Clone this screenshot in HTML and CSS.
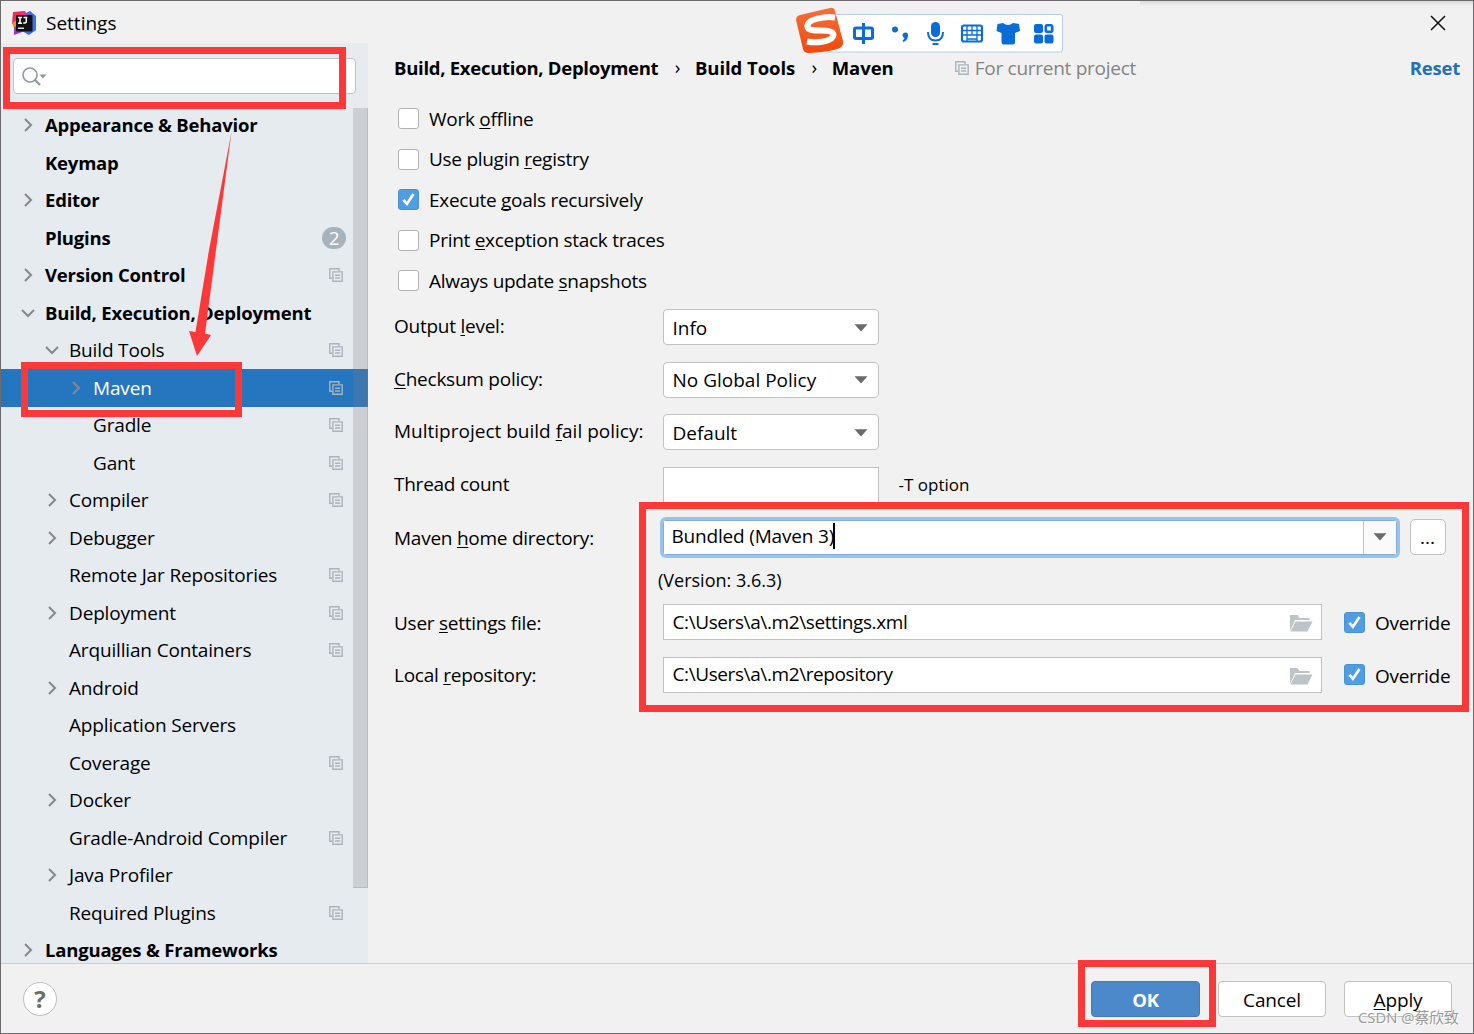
FILE: index.html
```html
<!DOCTYPE html>
<html lang="en">

<head>
  <meta charset="UTF-8">
  <meta name="viewport" content="width=device-width, initial-scale=1.0">
  <title>Settings</title>
  <link rel="stylesheet" href="styles.css">
</head>

<body>
  <!-- shared icons -->
  <svg class="sprite" width="0" height="0">
    <symbol id="chevron" viewBox="0 0 14 14"><path d="M4 1 L10 7 L4 13" fill="none" stroke="#85898d" stroke-width="2"/></symbol>
    <symbol id="copy" viewBox="0 0 14 14"><path d="M3 10.2 H.8 V.8 H10 V3" fill="none" stroke="#a9b4bd" stroke-width="1.4"/><path d="M3.9 3.9 H13.2 V13.2 H3.9 Z M6 7.3 H11.2 M6 10 H11.2" fill="none" stroke="#a9b4bd" stroke-width="1.4"/></symbol>
    <symbol id="arrow" viewBox="0 0 14 8"><path d="M.5 .3 H13.5 L7 7.5 Z" fill="#6a6a6a"/></symbol>
    <symbol id="tick" viewBox="0 0 21 21"><path d="M4.8 10.8 L8.8 15.2 L16 4.4" fill="none" stroke="#fff" stroke-width="2.9"/></symbol>
    <symbol id="folder" viewBox="0 0 24 18"><path d="M1 17 V1 H8.5 L10.5 4 H20.5 V6 H6 Z" fill="#bcc3c9"/><path d="M6.5 7.5 H23.5 L18.5 17.5 H1.5 Z" fill="#bcc3c9"/></symbol>
  </svg>

  <div class="window">
    <header class="titlebar">
      <svg class="app-icon" width="25" height="24" viewBox="0 0 25 24">
        <path d="M1 1 L12 0 L15 5 L4 12 L0 13 Z" fill="#f8285c"/>
        <path d="M0 12 L5 9 V18 L2 17 Z" fill="#f98b1c"/>
        <path d="M2 16 L8 15 L13 20 L2 24 Z" fill="#9039d3"/>
        <path d="M14 2 L18 0 L24 5 V19 L17 24 L10 20 Z" fill="#3c6eee"/>
        <path d="M9 1 L13 0 L16 5 H9 Z" fill="#ee2d85"/>
        <rect x="4" y="4" width="16.500" height="16.500" rx="1" fill="#111"/>
        <rect x="6" y="16.500" width="6" height="1.500" fill="#ddd"/>
        <path d="M6 6.500 H10 M8 6.500 V12 M6 12.200 H10 M11.500 6.500 H15.300 M14.300 6.500 V10.500 Q14.300 12.300 11.200 12" fill="none" stroke="#fff" stroke-width="1.500"/>
      </svg>
      <h1 class="title">Settings</h1>
      <svg class="close" width="16" height="16" viewBox="0 0 16 16"><path d="M1 1 L15 15 M15 1 L1 15" stroke="#111" stroke-width="1.500"/></svg>
    </header>

    <div class="content">
      <aside class="sidebar">
        <div class="search">
          <svg width="25" height="20" viewBox="0 0 25 20"><circle cx="8" cy="8" r="7" fill="none" stroke="#8f989f" stroke-width="1.600"/><path d="M12.500 12.500 L18 18" stroke="#8f989f" stroke-width="2.300"/><path d="M17.500 7.500 H24.500 L21 11.500 Z" fill="#8f989f"/></svg>
        </div>
        <ul class="tree">
          <li class="node top"><svg class="chev"><use href="#chevron"/></svg><span>Appearance &amp; Behavior</span></li>
          <li class="node top"><i class="chev"></i><span>Keymap</span></li>
          <li class="node top"><svg class="chev"><use href="#chevron"/></svg><span>Editor</span></li>
          <li class="node top"><i class="chev"></i><span>Plugins</span><b class="count">2</b></li>
          <li class="node top"><svg class="chev"><use href="#chevron"/></svg><span>Version Control</span><svg class="copy"><use href="#copy"/></svg></li>
          <li class="node top"><svg class="chev open"><use href="#chevron"/></svg><span>Build, Execution, Deployment</span></li>
          <li class="node sub"><svg class="chev open"><use href="#chevron"/></svg><span>Build Tools</span><svg class="copy"><use href="#copy"/></svg></li>
          <li class="node leaf selected"><svg class="chev"><use href="#chevron"/></svg><span>Maven</span><svg class="copy"><use href="#copy"/></svg></li>
          <li class="node leaf"><i class="chev"></i><span>Gradle</span><svg class="copy"><use href="#copy"/></svg></li>
          <li class="node leaf"><i class="chev"></i><span>Gant</span><svg class="copy"><use href="#copy"/></svg></li>
          <li class="node sub"><svg class="chev"><use href="#chevron"/></svg><span>Compiler</span><svg class="copy"><use href="#copy"/></svg></li>
          <li class="node sub"><svg class="chev"><use href="#chevron"/></svg><span>Debugger</span></li>
          <li class="node sub"><i class="chev"></i><span>Remote Jar Repositories</span><svg class="copy"><use href="#copy"/></svg></li>
          <li class="node sub"><svg class="chev"><use href="#chevron"/></svg><span>Deployment</span><svg class="copy"><use href="#copy"/></svg></li>
          <li class="node sub"><i class="chev"></i><span>Arquillian Containers</span><svg class="copy"><use href="#copy"/></svg></li>
          <li class="node sub"><svg class="chev"><use href="#chevron"/></svg><span>Android</span></li>
          <li class="node sub"><i class="chev"></i><span>Application Servers</span></li>
          <li class="node sub"><i class="chev"></i><span>Coverage</span><svg class="copy"><use href="#copy"/></svg></li>
          <li class="node sub"><svg class="chev"><use href="#chevron"/></svg><span>Docker</span></li>
          <li class="node sub"><i class="chev"></i><span>Gradle-Android Compiler</span><svg class="copy"><use href="#copy"/></svg></li>
          <li class="node sub"><svg class="chev"><use href="#chevron"/></svg><span>Java Profiler</span></li>
          <li class="node sub"><i class="chev"></i><span>Required Plugins</span><svg class="copy"><use href="#copy"/></svg></li>
          <li class="node top"><svg class="chev"><use href="#chevron"/></svg><span>Languages &amp; Frameworks</span></li>
        </ul>
        <div class="scrollbar"></div>
      </aside>

      <main class="panel">
        <div class="breadcrumb">
          <span class="crumb first">Build, Execution, Deployment</span>
          <span class="sep">›</span>
          <span class="crumb">Build Tools</span>
          <span class="sep">›</span>
          <span class="crumb">Maven</span>
          <span class="scope"><svg class="copy"><use href="#copy"/></svg>For current project</span>
          <a class="reset">Reset</a>
        </div>

        <div class="checks">
          <label class="check"><span class="box"></span><span>Work <u>o</u>ffline</span></label>
          <label class="check"><span class="box"></span><span>Use plugin <u>r</u>egistry</span></label>
          <label class="check"><svg class="box on"><use href="#tick"/></svg><span>Execute <u>g</u>oals recursively</span></label>
          <label class="check"><span class="box"></span><span>Print <u>e</u>xception stack traces</span></label>
          <label class="check"><span class="box"></span><span>Always update <u>s</u>napshots</span></label>
        </div>

        <div class="row">
          <label class="label raised">Output <u>l</u>evel:</label>
          <div class="select">Info<svg class="arrow"><use href="#arrow"/></svg></div>
        </div>
        <div class="row">
          <label class="label raised"><u>C</u>hecksum policy:</label>
          <div class="select">No Global Policy<svg class="arrow"><use href="#arrow"/></svg></div>
        </div>
        <div class="row">
          <label class="label raised multi">Multiproject build <u>f</u>ail policy:</label>
          <div class="select">Default<svg class="arrow"><use href="#arrow"/></svg></div>
        </div>
        <div class="row">
          <label class="label raised">Thread count</label>
          <div class="field short"></div>
          <span class="hint">-T option</span>
        </div>
        <div class="row">
          <label class="label lowered">Maven <u>h</u>ome directory:</label>
          <div class="combo">
            <div class="combo-text">Bundled (Maven 3)<i class="caret"></i></div>
            <div class="combo-button"><svg class="arrow"><use href="#arrow"/></svg></div>
          </div>
          <button class="browse">...</button>
        </div>
        <div class="version">(Version: 3.6.3)</div>
        <div class="row">
          <label class="label lowered">User <u>s</u>ettings file:</label>
          <div class="field path"><span>C:\Users\a\.m2\settings.xml</span><svg class="folder"><use href="#folder"/></svg></div>
          <label class="check override"><svg class="box on"><use href="#tick"/></svg><span>Override</span></label>
        </div>
        <div class="row">
          <label class="label lowered">Local <u>r</u>epository:</label>
          <div class="field path"><span>C:\Users\a\.m2\repository</span><svg class="folder"><use href="#folder"/></svg></div>
          <label class="check override"><svg class="box on"><use href="#tick"/></svg><span>Override</span></label>
        </div>
      </main>
    </div>

    <footer class="footer">
      <button class="help">?</button>
      <button class="btn primary">OK</button>
      <button class="btn">Cancel</button>
      <button class="btn"><u>A</u>pply</button>
    </footer>
  </div>
  <div class="top-shadow"></div>

  <!-- input method bar floating above the window -->
  <div class="ime">
    <svg width="270" height="48" viewBox="0 0 270 48">
      <defs>
        <linearGradient id="sogou" x1="0" y1="0" x2="0" y2="1"><stop offset="0" stop-color="#fb6d39"/><stop offset="1" stop-color="#ec4a0c"/></linearGradient>
      </defs>
      <rect x="30.500" y="7.500" width="236" height="37.500" rx="2" fill="#fff" stroke="#b8cee8"/>
      <path d="M4 8 L34 1 Q38 0 39 4 L47 34 Q48 38 44 41 Q35 45 13 46 Q8 46 7 42 L0 13 Q0 9 4 8 Z" fill="url(#sogou)"/>
      <path d="M39 10.500 C30 9 10 12 11.500 20 C13 27 38 20 37.500 28 C37 34.500 20 36.500 11 34.500" fill="none" stroke="#fff" stroke-width="6"/>
      <g fill="none" stroke="#0a6cd6" stroke-width="3">
        <rect x="58.500" y="21" width="18" height="10.500" rx="1.500"/>
        <path d="M67.500 16 V37"/>
      </g>
      <g fill="#0a6cd6">
        <circle cx="99" cy="22.500" r="3"/>
        <path d="M106.500 28 a2.800 2.800 0 1 1 5.300 1.500 Q111.500 33 107.500 35 L106.500 33.500 Q108.500 32 108.500 31 Q106.500 30.500 106.500 28 Z"/>
        <rect x="135" y="15" width="9" height="15" rx="4.500"/>
        <path d="M136.500 36 h6 v2 h-6z"/>
        <path d="M207 16 Q212 20 217 16 L223 17 L224 24 L219 26 V35.500 Q219 37.500 217 37.500 H207.500 Q205.500 37.500 205.500 35.500 V26 L200.500 24 L201.500 17 Z"/>
        <rect x="238" y="17" width="9" height="9" rx="2"/>
        <rect x="238" y="27.500" width="9" height="9" rx="2"/>
        <rect x="248.500" y="27.500" width="9" height="9" rx="2"/>
      </g>
      <rect x="249.800" y="18.300" width="6.400" height="6.400" rx="1.500" fill="none" stroke="#0a6cd6" stroke-width="2.600"/>
      <path d="M132 25 Q132 33.500 139.500 33.500 Q147 33.500 147 25" fill="none" stroke="#0a6cd6" stroke-width="2"/>
      <rect x="166" y="18.500" width="20" height="16" rx="2" fill="#fff" stroke="#0a6cd6" stroke-width="2.200"/>
      <path d="M167 23.500 H185 M167 28 H185 M171 19 V34 M176 19 V28 M181 19 V34 M171 32 H181" stroke="#0a6cd6" stroke-width="1.300"/>
    </svg>
  </div>

  <!-- red annotations -->
  <div class="mark mark-search"></div>
  <div class="mark mark-maven"></div>
  <div class="mark mark-paths"></div>
  <div class="mark mark-ok"></div>
  <svg class="mark-arrow" width="50" height="230" viewBox="0 0 50 230"><path d="M46.500 2 L24 120 L10.500 202 L4 201 L12 226 L26 205 L20 203.500 L31 120 Z" fill="#fc3838"/></svg>
  <div class="watermark">CSDN @蔡欣致</div>
</body>

</html>
```

FILE: styles.css
```css
* {
  margin: 0;
  padding: 0;
  box-sizing: border-box;
}

body {
  position: relative;
  width: 1474px;
  height: 1034px;
  overflow: hidden;
  font-family: "Open Sans", "Noto Sans", "Noto Sans CJK SC", sans-serif;
  font-size: 19px;
  line-height: 26px;
  color: #000;
  white-space: nowrap;
}

button {
  font: inherit;
}

u {
  text-decoration-thickness: 1px;
  text-underline-offset: 2px;
  text-decoration-skip-ink: none;
}

.sprite {
  position: absolute;
}

.window {
  display: flex;
  flex-direction: column;
  height: 1034px;
  background: #f1f1f1;
  border: 1px solid #6c6a6c;
}

.top-shadow {
  position: absolute;
  top: 1px;
  left: 1140px;
  right: 1px;
  height: 5px;
  background: linear-gradient(#d8d8d8, #f1f1f1);
}

.titlebar {
  display: flex;
  align-items: center;
  height: 42px;
  padding: 2px 27px 0 11px;
}

.title {
  margin-left: 9px;
  font-size: 19px;
  font-weight: 400;
}

.close {
  margin-left: auto;
}

.content {
  display: flex;
  height: 920px;
}

.sidebar {
  position: relative;
  width: 367px;
  overflow: hidden;
  background: #e6ebf0;
}

.search {
  display: flex;
  align-items: center;
  width: 343px;
  height: 36px;
  margin: 15px 0 12.5px 12px;
  padding: 1px 0 0 8px;
  background: #fff;
  border: 1px solid #c0c3c5;
  border-radius: 4px;
}

.tree {
  list-style: none;
}

.node {
  display: flex;
  align-items: center;
  height: 37.5px;
  padding-right: 25px;
  letter-spacing: -0.16px;
}

.chev {
  width: 14px;
  height: 14px;
  margin-right: 10px;
}

.chev.open {
  transform: rotate(90deg);
}

.top {
  padding-left: 20px;
}

.sub {
  padding-left: 44px;
}

.leaf {
  padding-left: 68px;
}

.top span,
.crumb {
  font-size: 18.5px;
  font-weight: 700;
  letter-spacing: -0.2px;
}

.crumb {
  letter-spacing: -0.05px;
}

.crumb.first {
  letter-spacing: -0.27px;
}

.selected {
  color: #fff;
  background: #2675bf;
}

.copy {
  width: 14px;
  height: 14px;
  margin-left: auto;
}

.count {
  width: 24px;
  height: 22px;
  margin: 0 -3px 0 auto;
  border-radius: 11px;
  background: #a7b3bc;
  color: #fff;
  font-weight: 400;
  line-height: 22px;
  text-align: center;
}

.scrollbar {
  position: absolute;
  top: 65px;
  right: 0;
  width: 15px;
  height: 780px;
  background: rgba(128, 128, 128, 0.25);
  border-right: 1px solid rgba(128, 128, 128, 0.25);
  border-bottom: 1px solid rgba(128, 128, 128, 0.25);
}

.panel {
  flex: 1;
  padding-left: 26px;
}

.breadcrumb {
  display: flex;
  align-items: center;
  height: 50px;
  margin-bottom: 5.5px;
  padding-right: 13px;
}

.sep {
  width: 36.5px;
  padding-bottom: 2px;
  padding-left: 2px;
  text-align: center;
}

.scope {
  display: flex;
  align-items: center;
  gap: 6px;
  margin-left: 61px;
  color: #848484;
  letter-spacing: -0.27px;
}

.reset {
  margin-left: auto;
  color: #2470b3;
  font-size: 18.5px;
  font-weight: 700;
  letter-spacing: -0.2px;
}

.check {
  display: flex;
  align-items: center;
  gap: 10px;
  height: 40.5px;
  padding-left: 4px;
  letter-spacing: -0.28px;
}

.box {
  width: 21px;
  height: 21px;
  background: #fff;
  border: 1px solid #b2b2b2;
  border-radius: 3px;
}

.box.on {
  background: #4f9ee3;
  border-color: #4a91d0;
}

.row {
  display: flex;
  align-items: center;
  height: 52.5px;
}

.label {
  width: 268.5px;
  letter-spacing: -0.25px;
}

.label.raised {
  padding-bottom: 2px;
}

.label.lowered {
  padding-top: 1px;
}

.label.multi {
  letter-spacing: 0;
}

.select,
.field {
  display: flex;
  align-items: center;
  justify-content: space-between;
  width: 216px;
  height: 36px;
  padding: 1px 10px 0 9px;
  background: #fff;
  border: 1px solid #c1c1c1;
  border-radius: 4px;
}

.field {
  border-radius: 0;
  padding: 0 8px 1px 9px;
}

.path {
  width: 659px;
  letter-spacing: -0.4px;
}

.arrow {
  width: 14px;
  height: 8px;
}

.folder {
  width: 24px;
  height: 18px;
  margin-top: 3px;
}

.hint {
  margin-left: 20px;
  font-size: 17px;
}

.combo {
  display: flex;
  width: 734px;
  height: 35px;
  border: 1px solid #83add8;
  border-radius: 3px;
  box-shadow: 0 0 0 3px #97c3f3;
}

.combo-text {
  display: flex;
  align-items: center;
  flex: 1;
  padding: 0 0 2px 8px;
  background: #fff;
  letter-spacing: -0.18px;
}

.caret {
  width: 2px;
  height: 26px;
  margin-left: -1px;
  background: #000;
}

.combo-button {
  display: flex;
  align-items: center;
  justify-content: center;
  width: 33px;
  border-left: 1px solid #c1c1c1;
  background: #fafafa;
}

.browse {
  width: 36px;
  height: 36px;
  margin-left: 13px;
  background: #fff;
  border: 1px solid #c1c1c1;
  border-radius: 5px;
}

.version {
  height: 32.5px;
  padding-left: 264px;
  font-size: 18px;
  line-height: 32.5px;
}

.override {
  margin-left: 18.5px;
}

.override span {
  padding-top: 2px;
}

.footer {
  display: flex;
  align-items: center;
  height: 70px;
  padding: 1px 21px 0 22px;
  border-top: 1px solid #cfcfcf;
}

.help {
  width: 34px;
  height: 34px;
  margin-right: auto;
  border: 1px solid #bfbfbf;
  border-radius: 50%;
  background: #fff;
  color: #6c6c6c;
  font-size: 24px;
  font-weight: 700;
  line-height: 32px;
}

.btn {
  width: 108px;
  height: 36px;
  padding-top: 1px;
  margin-left: 18px;
  background: #fff;
  border: 1px solid #c1c1c1;
  border-radius: 4px;
  letter-spacing: -0.15px;
}

.primary {
  width: 109px;
  background: #4c89cb;
  border-color: #417ab8;
  color: #fff;
  font-weight: 700;
  font-size: 18.5px;
}

.ime {
  position: absolute;
  left: 796px;
  top: 7px;
}

.mark {
  position: absolute;
  border: 7px solid #fc3838;
}

.mark-search {
  left: 3px;
  top: 47px;
  width: 343px;
  height: 62px;
}

.mark-maven {
  left: 21px;
  top: 362px;
  width: 221px;
  height: 55px;
}

.mark-paths {
  left: 639px;
  top: 502px;
  width: 830px;
  height: 210px;
}

.mark-ok {
  left: 1078px;
  top: 960px;
  width: 138px;
  height: 67px;
}

.mark-arrow {
  position: absolute;
  left: 185px;
  top: 130px;
}

.watermark {
  position: absolute;
  left: 1358px;
  top: 1006px;
  color: #999;
  font-size: 14.8px;
  line-height: 22px;
  text-shadow: 1px 1px 0 #fff;
}
```
